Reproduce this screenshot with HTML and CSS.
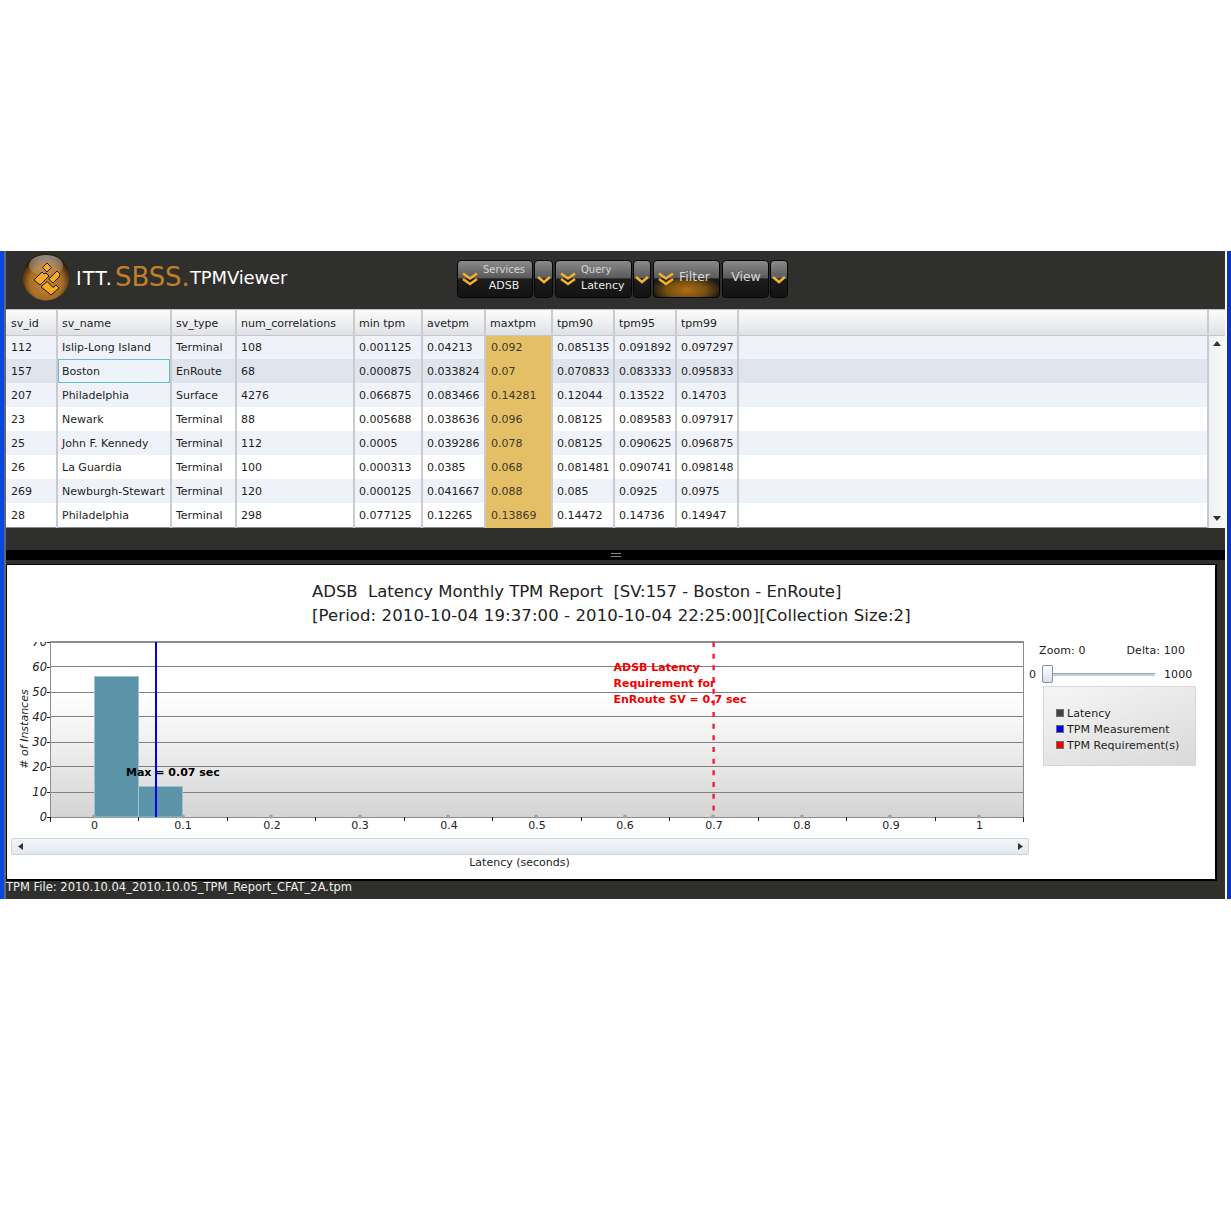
FILE: index.html
```html
<!DOCTYPE html>
<html lang="en">
<head>
<meta charset="utf-8">
<title>ITT.SBSS.TPMViewer</title>
<link rel="stylesheet" href="styles.css">
</head>
<body>
<svg class="defs" width="0" height="0" aria-hidden="true">
  <defs>
    <symbol id="dbl" viewBox="0 0 16 14">
      <path d="M1 1.5 8 6.5 15 1.5M1 7 8 12 15 7" fill="none" stroke="#f6b02a" stroke-width="2.5"/>
    </symbol>
    <symbol id="sgl" viewBox="0 0 14 8">
      <path d="M1 1 7 6 13 1" fill="none" stroke="#f6b02a" stroke-width="2.6"/>
    </symbol>
  </defs>
</svg>
<div class="window">
  <header class="topbar">
    <svg class="logo" viewBox="0 0 48 48" aria-hidden="true">
      <defs>
        <radialGradient id="orb" cx="50%" cy="62%" r="55%">
          <stop offset="0" stop-color="#c98a35"/>
          <stop offset=".65" stop-color="#a56c25"/>
          <stop offset=".9" stop-color="#5c3710"/>
          <stop offset="1" stop-color="#2f1c08"/>
        </radialGradient>
        <linearGradient id="gloss" x1="0" y1="0" x2="0" y2="1">
          <stop offset="0" stop-color="#fff" stop-opacity=".5"/>
          <stop offset="1" stop-color="#fff" stop-opacity=".04"/>
        </linearGradient>
      </defs>
      <circle cx="24" cy="24" r="23.5" fill="url(#orb)"/>
      <ellipse cx="24" cy="12.5" rx="17" ry="10.5" fill="url(#gloss)"/>
      <g fill="#f5ab22" stroke="#241505" stroke-width="1">
        <path d="M25 10 29.500 14.500 25 19 20.500 14.500Z"/>
        <path d="M24 20 27 23 18 32 12 27 20 19 22 21Z"/>
        <path d="M29 24 35 18 38 21 37 24 31 30 26.500 26Z"/>
        <path d="M19 34 25 28.500 31 34.500 34 32 37 35 29 42 25.500 39Z"/>
      </g>
    </svg>
    <div class="brand"><span class="b-itt">ITT.</span><span class="b-sbss">SBSS.</span><span class="b-app">TPMViewer</span></div>
    <nav class="toolbar">
      <div class="btn-group">
        <div class="btn w-services"><svg class="ico-dbl"><use href="#dbl"/></svg><div class="stack stack-center"><span class="small">Services</span><span>ADSB</span></div></div>
        <div class="btn caret caret-wide"><svg class="ico-sgl"><use href="#sgl"/></svg></div>
      </div>
      <div class="btn-group">
        <div class="btn w-query"><svg class="ico-dbl"><use href="#dbl"/></svg><div class="stack stack-left"><span class="small">Query</span><span>Latency</span></div></div>
        <div class="btn caret"><svg class="ico-sgl"><use href="#sgl"/></svg></div>
      </div>
      <div class="btn-group">
        <div class="btn w-filter"><svg class="ico-dbl"><use href="#dbl"/></svg><span class="big">Filter</span></div>
      </div>
      <div class="btn-group">
        <div class="btn w-view"><span class="big">View</span></div>
        <div class="btn caret"><svg class="ico-sgl"><use href="#sgl"/></svg></div>
      </div>
    </nav>
  </header>

  <section class="grid-wrap">
    <table class="grid">
      <thead>
        <tr>
          <th class="c1">sv_id</th><th class="c2">sv_name</th><th class="c3">sv_type</th><th class="c4">num_correlations</th><th class="c5">min tpm</th><th class="c6">avetpm</th><th class="c7">maxtpm</th><th class="c8">tpm90</th><th class="c9">tpm95</th><th class="c10">tpm99</th><th class="c11"></th><th class="c12"></th>
        </tr>
      </thead>
      <tbody>
        <tr class="alt"><td>112</td><td>Islip-Long Island</td><td>Terminal</td><td>108</td><td>0.001125</td><td>0.04213</td><td class="mx">0.092</td><td>0.085135</td><td>0.091892</td><td>0.097297</td><td></td>
          <td class="sb" rowspan="8"><div class="sb-in"><span class="arr up"></span><span class="arr down"></span></div></td></tr>
        <tr class="sel"><td>157</td><td class="cur">Boston</td><td>EnRoute</td><td>68</td><td>0.000875</td><td>0.033824</td><td class="mx">0.07</td><td>0.070833</td><td>0.083333</td><td>0.095833</td><td></td></tr>
        <tr class="alt"><td>207</td><td>Philadelphia</td><td>Surface</td><td>4276</td><td>0.066875</td><td>0.083466</td><td class="mx">0.14281</td><td>0.12044</td><td>0.13522</td><td>0.14703</td><td></td></tr>
        <tr><td>23</td><td>Newark</td><td>Terminal</td><td>88</td><td>0.005688</td><td>0.038636</td><td class="mx">0.096</td><td>0.08125</td><td>0.089583</td><td>0.097917</td><td></td></tr>
        <tr class="alt"><td>25</td><td>John F. Kennedy</td><td>Terminal</td><td>112</td><td>0.0005</td><td>0.039286</td><td class="mx">0.078</td><td>0.08125</td><td>0.090625</td><td>0.096875</td><td></td></tr>
        <tr><td>26</td><td>La Guardia</td><td>Terminal</td><td>100</td><td>0.000313</td><td>0.0385</td><td class="mx">0.068</td><td>0.081481</td><td>0.090741</td><td>0.098148</td><td></td></tr>
        <tr class="alt"><td>269</td><td>Newburgh-Stewart</td><td>Terminal</td><td>120</td><td>0.000125</td><td>0.041667</td><td class="mx">0.088</td><td>0.085</td><td>0.0925</td><td>0.0975</td><td></td></tr>
        <tr><td>28</td><td>Philadelphia</td><td>Terminal</td><td>298</td><td>0.077125</td><td>0.12265</td><td class="mx">0.13869</td><td>0.14472</td><td>0.14736</td><td>0.14947</td><td></td></tr>
      </tbody>
    </table>
  </section>

  <div class="band"></div>
  <div class="splitter"><span class="grip"></span></div>

  <section class="panel">
    <h1 class="title"><span class="t1">ADSB&nbsp; Latency Monthly TPM Report&nbsp; [SV:157 - Boston - EnRoute]</span><br><span class="t2">[Period: 2010-10-04 19:37:00 - 2010-10-04 22:25:00][Collection Size:2]</span></h1>
    <div class="chart-row">
      <svg class="chart" viewBox="7 640 1022 234" aria-label="Latency histogram">
        <defs>
          <linearGradient id="plotbg" x1="0" y1="0" x2="0" y2="1">
            <stop offset="0" stop-color="#fff"/>
            <stop offset=".3" stop-color="#fff"/>
            <stop offset=".6" stop-color="#eeeeee"/>
            <stop offset="1" stop-color="#d4d4d4"/>
          </linearGradient>
          <linearGradient id="sbar" x1="0" y1="0" x2="0" y2="1">
            <stop offset="0" stop-color="#f4f6f9"/>
            <stop offset="1" stop-color="#e3e7ec"/>
          </linearGradient>
          <clipPath id="clip"><rect x="7" y="642" width="50" height="200"/></clipPath>
        </defs>
        <rect x="50.5" y="642.5" width="973" height="175" fill="url(#plotbg)"/>
        <g class="grid-lines">
          <path d="M50 666.5H1024M50 692.5H1024M50 716.5H1024M50 742.5H1024M50 766.5H1024M50 792.5H1024"/>
        </g>
        <path class="plot-frame" d="M50.5 817V642.500H1023.500V817M50 817.500H1024"/>
        <path class="plot-top" d="M50 642H1024"/>
        <rect class="bar" x="94.5" y="676.5" width="44" height="140.5"/>
        <rect class="bar" x="138.5" y="786.5" width="44" height="30.5"/>
        <g class="dots">
          <circle cx="94" cy="816.5" r="2"/><circle cx="183" cy="816.5" r="2"/><circle cx="271" cy="816.5" r="2"/><circle cx="360" cy="816.5" r="2"/><circle cx="448" cy="816.5" r="2"/><circle cx="536" cy="816.5" r="2"/><circle cx="625" cy="816.5" r="2"/><circle cx="713" cy="816.5" r="2"/><circle cx="802" cy="816.5" r="2"/><circle cx="890" cy="816.5" r="2"/><circle cx="979" cy="816.5" r="2"/>
        </g>
        <path class="ticks" d="M50.5 817V822M138.5 817V821M227.5 817V821M315.5 817V821M404.5 817V821M492.5 817V821M581.5 817V821M669.5 817V821M758.5 817V821M846.5 817V821M935.5 817V821M1023.5 817V822M47 642.5H50M47 667.5H50M47 692.5H50M47 717.5H50M47 742.5H50M47 767.5H50M47 792.5H50M47 817.5H50"/>
        <rect class="line-blue" x="155" y="642" width="2" height="175"/>
        <path class="line-red" d="M713.6 642V817"/>
        <g class="ylab" clip-path="url(#clip)">
          <text x="47" y="646">70</text><text x="47" y="671">60</text><text x="47" y="696">50</text><text x="47" y="721">40</text><text x="47" y="746">30</text><text x="47" y="771">20</text><text x="47" y="796">10</text><text x="47" y="821">0</text>
        </g>
        <text class="ytitle" transform="translate(28 729) rotate(-90)">&#35; of Instances</text>
        <g class="xlab">
          <text x="94.5" y="829">0</text><text x="183" y="829">0.1</text><text x="272" y="829">0.2</text><text x="360" y="829">0.3</text><text x="449" y="829">0.4</text><text x="537" y="829">0.5</text><text x="625" y="829">0.6</text><text x="714" y="829">0.7</text><text x="802" y="829">0.8</text><text x="891" y="829">0.9</text><text x="979.5" y="829">1</text>
        </g>
        <text class="note-max" x="126" y="776">Max = 0.07 sec</text>
        <g class="note-req">
          <text x="613.5" y="671">ADSB Latency</text><text x="613.5" y="687">Requirement for</text><text x="613.5" y="703">EnRoute SV = 0.7 sec</text>
        </g>
        <rect class="hscroll" x="11.5" y="838.5" width="1017" height="16" rx="1.5" fill="url(#sbar)"/>
        <path class="harr" d="M18 846.5 23 843V850ZM1023 846.5 1018 843V850Z"/>
        <text class="xtitle" x="519.5" y="866">Latency (seconds)</text>
      </svg>
      <aside class="side">
        <div class="zoom-row"><span>Zoom: 0</span><span>Delta: 100</span></div>
        <div class="slider-row">
          <span class="s-min">0</span>
          <div class="slider"><span class="thumb"></span></div>
          <span>1000</span>
        </div>
        <div class="legend">
          <div class="lg"><i class="sw sw-lat"></i>Latency</div>
          <div class="lg"><i class="sw sw-meas"></i>TPM Measurement</div>
          <div class="lg"><i class="sw sw-req"></i>TPM Requirement(s)</div>
        </div>
      </aside>
    </div>
  </section>
  <footer class="status">TPM File: 2010.10.04_2010.10.05_TPM_Report_CFAT_2A.tpm</footer>
</div>
</body>
</html>
```
FILE: styles.css
```css
* { box-sizing: border-box; }
html, body { margin: 0; padding: 0; background: #fff; }
body { padding-top: 251px; height: 1231px; overflow: hidden; font: 11px "DejaVu Sans", "Liberation Sans", sans-serif; color: #1e1e1e; }
.defs { position: absolute; }
.window {
  height: 648px; display: flex; flex-direction: column;
  background: #2f2f2d;
  border-left: 4px solid #0a46e0;
  border-right: 4px solid #0c34c0;
  padding: 0 2px;
  box-shadow: inset 2px 0 0 #5d6673, inset -2px 0 0 #fff;
}
.topbar { height: 58px; flex: none; display: flex; align-items: flex-start; position: relative; }
.logo { width: 48px; height: 48px; margin: 2px 0 0 16px; flex: none; }
.brand { margin: 0 0 0 6px; height: 52px; display: flex; align-items: flex-start; white-space: nowrap; color: #fff; padding-top: 11px; line-height: 30px; }
.b-itt { font-size: 19px; letter-spacing: 1.2px; width: 39px; margin-top: 1px; }
.b-sbss { font-size: 26px; color: #c08026; width: 75px; letter-spacing: -0.1px; }
.b-app { font-size: 18px; letter-spacing: -0.15px; margin-top: 1px; }
.toolbar { position: absolute; left: 451px; top: 9px; display: flex; gap: 2px; }
.btn-group { display: flex; gap: 1px; }
.btn {
  height: 38px; display: flex; align-items: center; color: #e9e9e9;
  border: 1px solid #050505; border-radius: 4px;
  background: linear-gradient(#8a8a8a 0, #595959 48%, #1c1c1c 49%, #141414 100%);
  position: relative;
}
.w-services { width: 76px; }
.w-query { width: 77px; }
.w-filter { width: 67px; background: radial-gradient(ellipse 36px 15px at 50% 62%, #ad6e18 0, #75500f 55%, rgba(30,22,10,0) 100%) bottom / 100% 50% no-repeat, linear-gradient(#8a8a8a 0, #595959 48%, #1c1c1c 49%, #141414 100%); }
.w-view { width: 47px; justify-content: center; }
.caret { width: 18px; justify-content: center; }
.caret-wide { width: 19px; }
.ico-dbl { width: 16px; height: 14px; margin: 0 0 0 4px; flex: none; }
.ico-sgl { width: 14px; height: 8px; margin-top: 2px; }
.stack { display: flex; flex-direction: column; align-items: center; flex: 1; line-height: 16px; margin-top: -2px; }
.stack-center { padding-right: 2px; }
.stack-left { align-items: flex-start; padding-left: 5px; }
.small { font-size: 10px; color: #d6d6d6; }
.big { font-size: 12.5px; color: #d8d8d8; margin: -6px 0 0 5px; }
.w-view .big { margin-left: 1px; }

.grid-wrap { height: 219px; flex: none; background: #fff; border-top: 1px solid #b8bcc0; border-bottom: 1px solid #8a8d90; width: 1219px; }
.grid { border-collapse: collapse; table-layout: fixed; width: 1219px; }
th, td { padding: 1px 0 0 4px; text-align: left; white-space: nowrap; overflow: hidden; font-weight: 400; font-size: 11px; border-right: 2px solid #c9cbce; }
th { height: 25px; padding-top: 2px; background: linear-gradient(#fbfbfc, #f0f1f3 45%, #dfe1e5); border-bottom: 1px solid #c4c7cb; color: #222; }
td { height: 24px; }
th:first-child, td:first-child { padding-left: 5px; }
.c1 { width: 51px; } .c2 { width: 114px; } .c3 { width: 65px; } .c4 { width: 118px; } .c5 { width: 68px; } .c6 { width: 63px; }
.c7 { width: 67px; } .c8 { width: 62px; } .c9 { width: 62px; } .c10 { width: 62px; } .c11 { width: 470px; } .c12 { width: 17px; border-right: 0; }
tr.alt td { background: #eff2f8; }
tr.sel td { background: #e0e4ec; }
td.mx, tr.alt td.mx, tr.sel td.mx { background: #e5bf66; color: #3a3a2a; padding-left: 5px; }
tr td.cur, tr.sel td.cur { box-shadow: inset 0 0 0 1px #63bfd0; background: #eef3f8; }
td.sb { background: #fff; border-right: 0; padding: 0; vertical-align: top; }
.sb-in { height: 192px; display: flex; flex-direction: column; justify-content: space-between; align-items: center; padding: 5px 0 7px; background: linear-gradient(90deg, #eef0f3, #f8f9fa); }
.arr { width: 0; height: 0; border-left: 4px solid transparent; border-right: 4px solid transparent; }
.up { border-bottom: 5px solid #333; }
.down { border-top: 5px solid #333; }

.band { height: 22px; flex: none; }
.splitter { height: 10px; flex: none; width: 1219px; background: #000; display: flex; justify-content: center; align-items: center; }
.grip { width: 10px; height: 4px; border-top: 1px solid #8a8a8a; border-bottom: 1px solid #8a8a8a; }
.panel { margin-top: 4px; height: 317px; width: 1211px; flex: none; background: #fff; border: 1px solid #000; border-right-width: 2px; border-bottom-width: 2px; }
.title { margin: 0; padding: 15px 0 0 305px; height: 75px; font-size: 16.5px; line-height: 24px; font-weight: 400; color: #222; white-space: nowrap; }
.t1 { letter-spacing: -0.04px; }
.t2 { letter-spacing: 0.1px; }
.chart-row { display: flex; }
.chart { width: 1022px; height: 234px; flex: none; display: block; }
.grid-lines path { stroke: #808080; stroke-width: 1; fill: none; }
.plot-frame { stroke: #8c8c8c; fill: none; stroke-width: 1; }
.plot-top { stroke: #8c8c8c; fill: none; stroke-width: 2; }
.bar { fill: #5b93a9; stroke: #9fc0cd; stroke-width: 1; }
.dots circle { fill: #a4a4a4; }
.ticks { stroke: #222; stroke-width: 1; fill: none; }
.line-blue { fill: #0000f0; }
.line-red { stroke: #f0203c; stroke-width: 2.4; stroke-dasharray: 5 6.67; fill: none; }
.chart text { font-family: "DejaVu Sans", "Liberation Sans", sans-serif; font-size: 11px; fill: #222; }
.chart .ylab text { text-anchor: end; font-style: italic; font-size: 11.5px; }
.chart .ytitle { text-anchor: middle; font-style: italic; }
.chart .xlab text { text-anchor: middle; }
.chart .note-max { font-weight: 700; fill: #000; }
.chart .note-req text { font-weight: 700; fill: #f00000; }
.hscroll { stroke: #cfd4da; stroke-width: 1; }
.harr { fill: #333; }
.chart .xtitle { text-anchor: middle; }
.side { width: 168px; flex: none; display: flex; flex-direction: column; color: #222; padding-top: 4px; letter-spacing: 0.1px; }
.zoom-row { display: flex; justify-content: space-between; padding: 0 12px 0 10px; line-height: 14px; }
.slider-row { display: flex; align-items: center; margin-top: 6px; height: 20px; }
.s-min { width: 13px; }
.slider { width: 113px; height: 3px; margin-right: 9px; background: #c3cdd8; border-top: 1px solid #9cabba; position: relative; }
.thumb { position: absolute; left: 0; top: -9px; width: 11px; height: 18px; border: 1px solid #7f93a8; border-radius: 2px; background: linear-gradient(#fff, #dcdfe3); }
.legend { margin: 2px 0 0 14px; width: 153px; height: 80px; padding: 18px 0 0 12px; border: 1px solid #d8d8d8; background: linear-gradient(160deg, #f6f6f6, #d9d9d9); }
.lg { display: flex; align-items: center; height: 16px; letter-spacing: 0.05px; }
.sw { width: 8px; height: 8px; margin-right: 3px; border: 1px solid #6e6e6e; }
.sw-lat { background: #444; }
.sw-meas { background: #0000f0; }
.sw-req { background: #f00000; }
.status { color: #f0f0f0; font-size: 11.5px; line-height: 13px; height: 17px; }
```
